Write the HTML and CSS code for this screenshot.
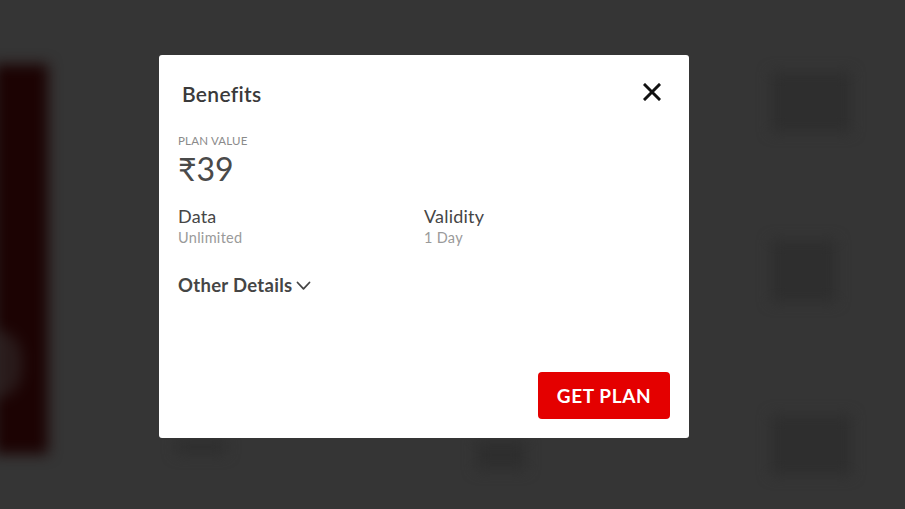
FILE: index.html
```html
<!DOCTYPE html>
<html lang="en">
<head>
<meta charset="utf-8">
<title>Benefits</title>
<link rel="stylesheet" href="styles.css">
</head>
<body>
<div class="backdrop">
  <div class="banner">
    <div class="banner-glow"></div>
  </div>
  <div class="backdrop-main">
    <div class="ghost ghost-a"></div>
    <div class="ghost ghost-b"></div>
  </div>
  <div class="backdrop-side">
    <div class="ghost ghost-c"></div>
    <div class="ghost ghost-d"></div>
    <div class="ghost ghost-e"></div>
  </div>
</div>

<div class="overlay">
  <div class="modal">
    <div class="modal-head">
      <h2 class="modal-title">Benefits</h2>
      <button class="close-btn" aria-label="Close">
        <svg width="18" height="18" viewBox="0 0 18 18"><path d="M2 2 L16 16 M16 2 L2 16" stroke="#111" stroke-width="3" stroke-linecap="square" fill="none"/></svg>
      </button>
    </div>
    <div class="modal-body">
      <div class="label">PLAN VALUE</div>
      <div class="price">₹39</div>
      <div class="specs">
        <div class="spec">
          <div class="spec-name">Data</div>
          <div class="spec-value">Unlimited</div>
        </div>
        <div class="spec">
          <div class="spec-name">Validity</div>
          <div class="spec-value">1 Day</div>
        </div>
      </div>
      <div class="other">
        <span>Other Details</span>
        <svg width="15" height="10" viewBox="0 0 15 10"><path d="M1.5 1.5 L7.5 7.8 L13.5 1.5" stroke="#444" stroke-width="1.8" fill="none" stroke-linecap="round" stroke-linejoin="round"/></svg>
      </div>
    </div>
    <div class="modal-foot">
      <button class="cta">GET PLAN</button>
    </div>
  </div>
</div>
</body>
</html>
```

FILE: styles.css
```css
* { box-sizing: border-box; }
html, body { margin: 0; padding: 0; }
body {
  width: 905px;
  height: 509px;
  overflow: hidden;
  background: #353535;
  font-family: "Lato", "Noto Sans", "DejaVu Sans", sans-serif;
  position: relative;
}

/* blurred page behind the dialog */
.backdrop {
  display: flex;
  height: 509px;
  filter: blur(7px);
}
.banner {
  width: 54px;
  margin-top: 64px;
  height: 390px;
  background: #1c0303;
  position: relative;
  margin-left: -6px;
}
.banner-glow {
  position: absolute;
  left: 0;
  top: 265px;
  width: 28px;
  height: 70px;
  background: #3a3a3a;
  border-radius: 0 40px 40px 0;
  opacity: 0.45;
}
.backdrop-main {
  flex: 1;
  position: relative;
}
.backdrop-side {
  width: 140px;
  display: flex;
  flex-direction: column;
  padding-top: 72px;
  padding-left: 6px;
}
.ghost { background: #2e2e2e; }
.ghost-a { position: absolute; left: 128px; top: 440px; width: 50px; height: 14px; }
.ghost-b { position: absolute; left: 428px; top: 440px; width: 50px; height: 30px; }
.ghost-c { width: 80px; height: 60px; margin-bottom: 108px; }
.ghost-d { width: 65px; height: 62px; margin-bottom: 113px; }
.ghost-e { width: 80px; height: 60px; }

/* dialog */
.overlay {
  position: absolute;
  inset: 0;
  padding: 55px 0 0 159px;
}
.modal {
  width: 530px;
  height: 383px;
  background: #fff;
  border-radius: 3px;
  padding: 0 19px 19px 19px;
  display: flex;
  flex-direction: column;
}
.modal-head {
  display: flex;
  justify-content: space-between;
  align-items: flex-start;
  padding: 27px 9px 0 4px;
}
.modal-title {
  margin: 0;
  font-size: 21px;
  line-height: 24px;
  font-weight: 600;
  letter-spacing: 0.3px;
  color: #3a3a3a;
}
.close-btn {
  border: 0;
  background: none;
  padding: 0;
  margin-top: 1px;
  width: 18px;
  height: 18px;
  display: block;
  cursor: pointer;
}
.close-btn svg { display: block; }

.modal-body {
  flex: 1;
  padding-top: 28px;
}
.label {
  font-size: 11.5px;
  line-height: 14px;
  color: #8a8a8a;
  letter-spacing: 0.2px;
}
.price {
  font-size: 32px;
  line-height: 36px;
  color: #4a4a4a;
  margin-top: 3px;
}
.specs {
  display: grid;
  grid-template-columns: 246px 1fr;
  margin-top: 18px;
}
.spec-name {
  font-size: 18px;
  line-height: 22px;
  color: #464646;
  letter-spacing: 0.2px;
}
.spec-value {
  font-size: 14.5px;
  line-height: 18px;
  color: #9a9a9a;
  letter-spacing: 0.3px;
  margin-top: 2px;
}
.other {
  display: flex;
  align-items: center;
  gap: 4px;
  margin-top: 27px;
  font-size: 18.5px;
  line-height: 22px;
  font-weight: 700;
  letter-spacing: 0.3px;
  color: #454545;
}
.other svg { display: block; margin-top: 1px; }

.modal-foot {
  display: flex;
  justify-content: flex-end;
}
.cta {
  width: 132px;
  height: 47px;
  border: 0;
  border-radius: 4px;
  background: #e40000;
  color: #fff;
  font-family: inherit;
  font-size: 19px;
  font-weight: 700;
  letter-spacing: 0.6px;
  cursor: pointer;
}
```
